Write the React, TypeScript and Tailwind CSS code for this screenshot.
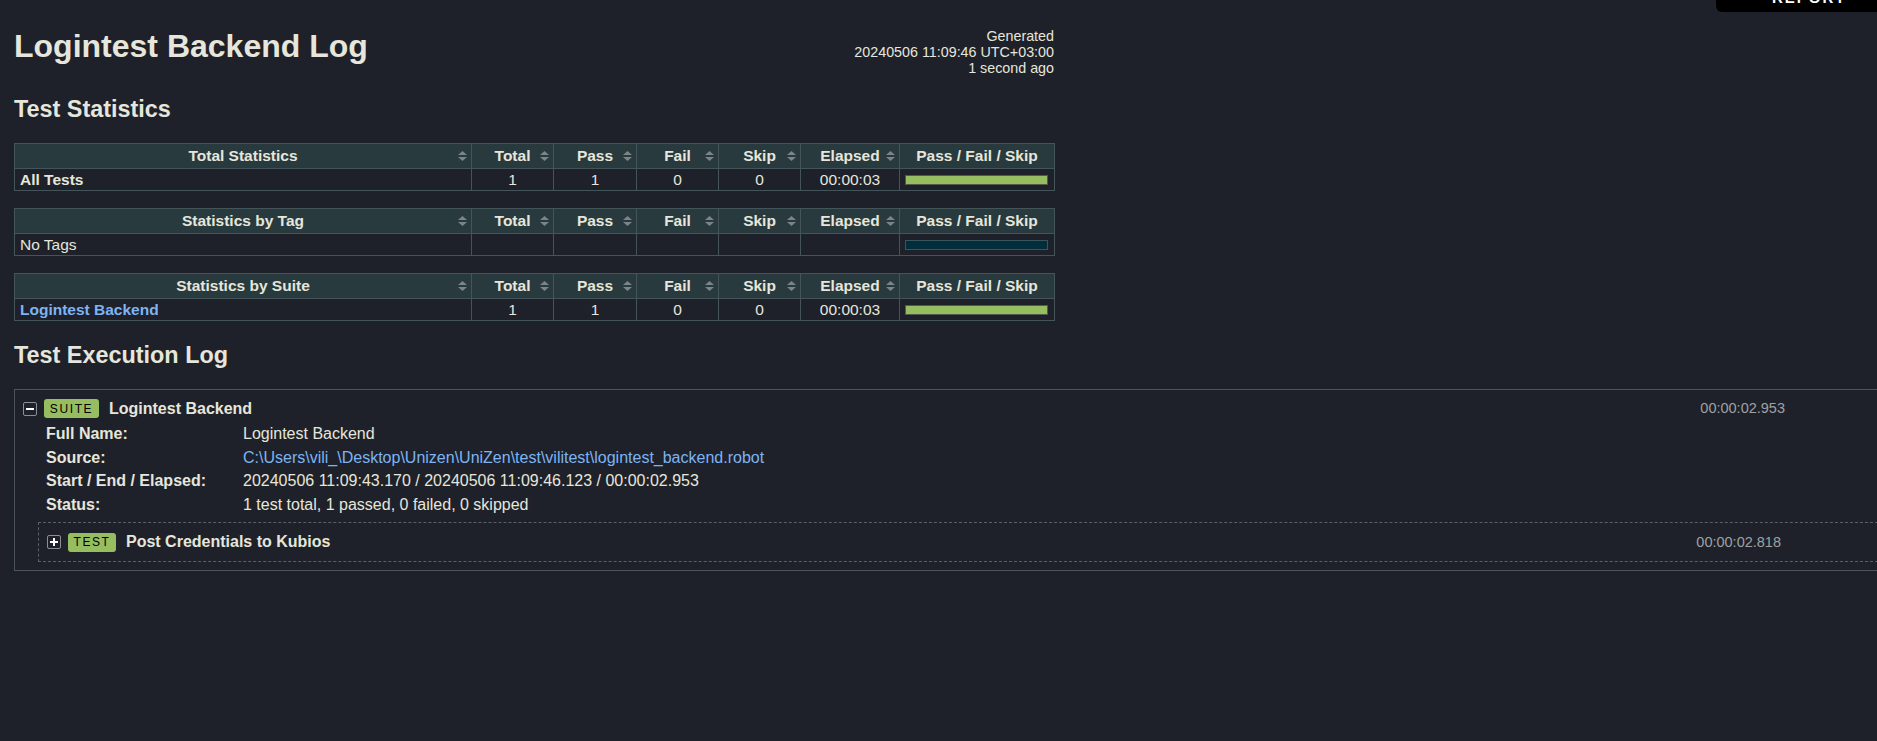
import React from 'react';

// 통계 테이블 컬럼 폭 (px)
const COLS = ['w-[457px]', 'w-[82px]', 'w-[83px]', 'w-[82px]', 'w-[82px]', 'w-[99px]', 'w-[155px]'];

type StatRow = {
  name: string;
  link?: boolean;
  bold?: boolean;
  total?: string;
  pass?: string;
  fail?: string;
  skip?: string;
  elapsed?: string;
  passed: boolean;
};

function SortArrows() {
  return (
    <svg width="9" height="10" viewBox="0 0 9 10" className="absolute right-[4px] top-1/2 -translate-y-1/2">
      <polygon points="0,4 4.5,0 9,4" fill="#7b8586" />
      <polygon points="0,6 4.5,10 9,6" fill="#7b8586" />
    </svg>
  );
}

function StatTable({ title, row }: { title: string; row: StatRow }) {
  const heads = [title, 'Total', 'Pass', 'Fail', 'Skip', 'Elapsed'];
  return (
    <table className="table-fixed border-collapse w-[1041px] text-[15.5px]">
      <colgroup>
        {COLS.map((c, i) => <col key={i} className={c} />)}
      </colgroup>
      <thead>
        <tr className="bg-[#283a3d]">
          {heads.map(h => (
            <th key={h} className="relative h-[25px] border border-[#44555a] p-0 text-center font-bold leading-[18px]">
              {h}
              <SortArrows />
            </th>
          ))}
          <th className="h-[25px] border border-[#44555a] p-0 text-center font-bold leading-[18px]">Pass / Fail / Skip</th>
        </tr>
      </thead>
      <tbody>
        <tr>
          <td className={`h-[22px] border border-[#44555a] px-[5px] py-0 leading-[18px] ${row.bold ? 'font-bold' : ''} ${row.link ? 'text-[#7db4f3]' : ''}`}>
            {row.name}
          </td>
          <td className="border border-[#44555a] p-0 text-center leading-[18px]">{row.total}</td>
          <td className="border border-[#44555a] p-0 text-center leading-[18px]">{row.pass}</td>
          <td className="border border-[#44555a] p-0 text-center leading-[18px]">{row.fail}</td>
          <td className="border border-[#44555a] p-0 text-center leading-[18px]">{row.skip}</td>
          <td className="border border-[#44555a] p-0 text-center leading-[18px]">{row.elapsed}</td>
          <td className="border border-[#44555a] pl-[5px] pr-[6px] py-0">
            {row.passed
              ? <div className="h-[10px] border border-[#4f5a4a] bg-[#97bd61]" />
              : <div className="h-[10px] border border-[#3a5560] bg-[#012e3a]" />}
          </td>
        </tr>
      </tbody>
    </table>
  );
}

function Toggle({ open }: { open: boolean }) {
  return (
    <svg width="14" height="14" viewBox="0 0 14 14" className="shrink-0">
      <rect x="0.5" y="0.5" width="13" height="13" rx="1.5" fill="none" stroke="#8b9096" />
      <rect x="3" y="6" width="8" height="2" fill="#ffffff" />
      {!open && <rect x="6" y="3" width="2" height="8" fill="#ffffff" />}
    </svg>
  );
}

function Badge({ label, w }: { label: string; w: string }) {
  return (
    <span className={`${w} flex h-[19px] shrink-0 items-center justify-center rounded-[3px] bg-[#97bd61] text-[12px] font-medium tracking-[1.6px] text-black`}>
      {label}
    </span>
  );
}

const META: [string, string, boolean?][] = [
  ['Full Name:', 'Logintest Backend'],
  ['Source:', 'C:\\Users\\vili_\\Desktop\\Unizen\\UniZen\\test\\vilitest\\logintest_backend.robot', true],
  ['Start / End / Elapsed:', '20240506 11:09:43.170 / 20240506 11:09:46.123 / 00:00:02.953'],
  ['Status:', '1 test total, 1 passed, 0 failed, 0 skipped'],
];

export default function App() {
  return (
    <div className="relative min-h-[741px] w-full overflow-hidden bg-[#1e2129] font-['Liberation_Sans',Arial,sans-serif] text-[#e6e6dc]">
      {/* 우상단 REPORT 링크 (스크롤에 잘림) */}
      <div className="absolute right-0 top-[-30px] h-[42px] w-[161px] rounded-bl-[6px] bg-black">
        <span className="absolute left-[56px] top-[20px] text-[15px] font-bold leading-[15px] tracking-[2px] text-white">REPORT</span>
      </div>

      <div className="pl-[14px] pt-[28px]">
        {/* 헤더 */}
        <div className="flex w-[1040px] items-start justify-between">
          <h1 className="mt-[2px] text-[32px] font-bold leading-[32px]">Logintest Backend Log</h1>
          <div className="text-right text-[14.3px] leading-[16px]">
            <div>Generated</div>
            <div>20240506 11:09:46 UTC+03:00</div>
            <div>1 second ago</div>
          </div>
        </div>

        <h2 className="mt-[19px] text-[23.4px] font-bold leading-[28px]">Test Statistics</h2>

        <div className="mt-[20px] flex flex-col gap-[17px]">
          <StatTable title="Total Statistics" row={{ name: 'All Tests', bold: true, total: '1', pass: '1', fail: '0', skip: '0', elapsed: '00:00:03', passed: true }} />
          <StatTable title="Statistics by Tag" row={{ name: 'No Tags', passed: false }} />
          <StatTable title="Statistics by Suite" row={{ name: 'Logintest Backend', bold: true, link: true, total: '1', pass: '1', fail: '0', skip: '0', elapsed: '00:00:03', passed: true }} />
        </div>

        <h2 className="mt-[20px] text-[23.4px] font-bold leading-[28px]">Test Execution Log</h2>

        {/* 스위트 */}
        <div className="mt-[20px] w-[1900px] border border-[#4b5459] pb-[8px]">
          <div className="mt-[9px] flex h-[19px] items-center pl-[8px]">
            <Toggle open />
            <span className="ml-[7px]"><Badge label="SUITE" w="w-[55px]" /></span>
            <span className="ml-[10px] text-[16px] font-bold leading-[19px]">Logintest Backend</span>
            <span className="ml-auto mr-[128px] text-[14.5px] leading-[19px] text-[#9ea1a4]">00:00:02.953</span>
          </div>

          <div className="mt-[4px] grid grid-cols-[197px_1fr] pl-[31px] text-[16px] leading-[23.6px]">
            {META.map(([k, v, link]) => (
              <React.Fragment key={k}>
                <div className="font-bold">{k}</div>
                <div className={link ? 'text-[#7db4f3]' : ''}>{v}</div>
              </React.Fragment>
            ))}
          </div>

          {/* 테스트 */}
          <div className="ml-[23px] mt-[6px] border border-dashed border-[#596069] py-[10px]">
            <div className="flex h-[18px] items-center pl-[8px]">
              <Toggle open={false} />
              <span className="ml-[7px]"><Badge label="TEST" w="w-[48px]" /></span>
              <span className="ml-[10px] text-[16px] font-bold leading-[18px]">Post Credentials to Kubios</span>
              <span className="ml-auto mr-[131px] text-[14.5px] leading-[18px] text-[#9ea1a4]">00:00:02.818</span>
            </div>
          </div>
        </div>
      </div>
    </div>
  );
}
